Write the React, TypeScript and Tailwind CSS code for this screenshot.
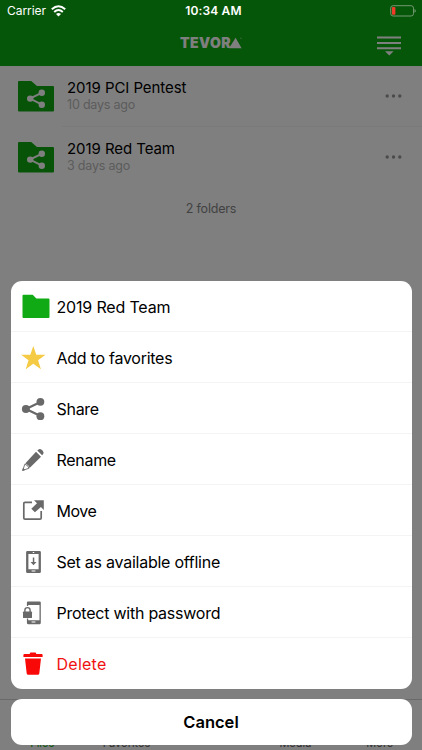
import type { ReactNode } from "react";

type Folder = {
  name: string;
  modified: string;
};

type SheetAction = {
  label: string;
  icon: ReactNode;
  className?: string;
};

const folders: Folder[] = [
  { name: "2019 PCI Pentest", modified: "10 days ago" },
  { name: "2019 Red Team", modified: "3 days ago" },
];

function FolderIcon() {
  return (
    <svg className="-mr-1.5 shrink-0" width="28" height="24" viewBox="0 0 28 24" fill="#10ab14">
      <path d="M1.500.8h9.200l3.700 3.700H26.500q1 0 1 1v17.500q0 1-1 1H1.500q-1 0-1-1v-21.200q0-1 1-1z" />
    </svg>
  );
}

function SharedFolderIcon() {
  return (
    <svg width="36" height="31" viewBox="0 0 36 31">
      <path
        fill="#0fa912"
        d="M1 0h12.200l5.800 5H35q1 0 1 1v23.500q0 1-1 1H1q-1 0-1-1V1q0-1 1-1z"
      />
      <path d="M24 11.700 12 17.600l12 6.100" fill="none" stroke="#fff" strokeWidth="1.900" />
      <g fill="#fff">
        <circle cx="23.800" cy="11.700" r="3.200" />
        <circle cx="12.200" cy="17.600" r="3.200" />
        <circle cx="23.800" cy="23.700" r="3.200" />
      </g>
    </svg>
  );
}

function StarIcon() {
  return (
    <svg className="mt-[2px]" width="26" height="24" viewBox="0 0 26 24" fill="#f5cb46">
      <path d="m13.300 0 3 8.800h9.200l-7.400 5.500 2.800 8.900-7.600-5.400-7.600 5.400 2.800-8.900L1.100 8.800h9.200z" />
    </svg>
  );
}

function ShareIcon() {
  return (
    <svg className="mt-px" width="24" height="24" viewBox="0 0 24 24" fill="#696969">
      <path d="M20 4.700 5 12l15 7.300" fill="none" stroke="#696969" strokeWidth="2.300" />
      <circle cx="19.400" cy="4.800" r="3.900" />
      <circle cx="4.900" cy="12" r="4" />
      <circle cx="19.400" cy="19.200" r="3.900" />
    </svg>
  );
}

function PencilIcon() {
  return (
    <svg className="mt-[2px]" width="24" height="24" viewBox="0 0 24 24" fill="#696969">
      <path d="m15 3.700 5 5L8.600 20.100l-1.400-2.900-3-1.600zM16.300 2.400l1.200-1q1.600-1.100 3.500.6l.7.700q1.600 1.900.5 3.400l-1.100 1.200z" />
      <path
        d="m3.800 16.200-2 6.100 6.100-2-1.200-2.500z"
        fill="#fff"
        stroke="#696969"
        strokeWidth=".9"
      />
      <path d="m1.100 23 .9-3.300 2.300 2.300z" />
    </svg>
  );
}

function MoveIcon() {
  return (
    <svg width="24" height="24" viewBox="0 0 24 24" fill="#696969">
      <path
        d="M11 4.300H4q-1.200 0-1.200 1.200v14.400Q2.800 21.100 4 21.100h15q1.200 0 1.200-1.200V13"
        fill="none"
        stroke="#696969"
        strokeWidth="1.700"
      />
      <path d="M13 2.200h9.800V12l-2.900-2.900-6 5.200-3.600-3.600 5.700-5.500z" />
    </svg>
  );
}

function OfflineIcon() {
  return (
    <svg className="mt-px" width="24" height="24" viewBox="0 0 24 24" fill="#696969">
      <path
        fillRule="evenodd"
        d="M6.500.9h12q1.400 0 1.400 1.400v19.400q0 1.400-1.400 1.400h-12q-1.400 0-1.400-1.400V2.300Q5.100.9 6.500.9zM7.400 4v15.200h10.200V4z"
      />
      <path d="M11.800 7.600h1.500v4.300h2.200l-3 3.400-3-3.400h2.300z" />
      <path d="M10.600 20.400h3.800v1.200h-3.800zM11.800 2h1.400v.9h-1.400z" fill="#fff" />
    </svg>
  );
}

function PasswordIcon() {
  return (
    <svg className="mt-px" width="24" height="24" viewBox="0 0 24 24" fill="#696969">
      <path
        fillRule="evenodd"
        d="M7 .5h11.700q1.100 0 1.100 1.100v20.500q0 1.100-1.100 1.100H7q-1.100 0-1.100-1.100V1.600Q5.900.5 7 .5zM7.200 4v15.200h11.300V4z"
      />
      <path d="M10.600 20.400h3.800v1.200h-3.800z" fill="#fff" />
      <path
        d="M1.500 10.800h1.100V8.600q0-2.900 3.900-2.900t3.900 2.900v2.200h.8v6H1.500z"
        fill="#fff"
        stroke="#fff"
        strokeWidth="1.600"
      />
      <path d="M3.900 11V9q0-2.400 2.600-2.400T9.100 9v2" fill="none" stroke="#696969" strokeWidth="1.400" />
      <rect x="2" y="10.600" width="9" height="6.500" rx=".7" />
    </svg>
  );
}

function TrashIcon() {
  return (
    <svg width="24" height="24" viewBox="0 0 24 24" fill="#f90808">
      <path d="M8.600 1.900 9.400.5h5.200l.8 1.400h5.200q1 0 1 1v2H2.400v-2q0-1 1-1zM4 6.600h16l-1.700 14.800q-.2 1.300-1.500 1.300H7.200q-1.300 0-1.500-1.300z" />
    </svg>
  );
}

const actions: SheetAction[] = [
  { label: "2019 Red Team", icon: <FolderIcon />, className: "tracking-[-0.17px]" },
  { label: "Add to favorites", icon: <StarIcon />, className: "tracking-[-0.26px]" },
  { label: "Share", icon: <ShareIcon />, className: "tracking-[-0.3px]" },
  { label: "Rename", icon: <PencilIcon />, className: "tracking-[-0.3px]" },
  { label: "Move", icon: <MoveIcon />, className: "tracking-[-0.5px]" },
  { label: "Set as available offline", icon: <OfflineIcon />, className: "tracking-[-0.25px]" },
  { label: "Protect with password", icon: <PasswordIcon />, className: "tracking-[-0.24px]" },
  { label: "Delete", icon: <TrashIcon />, className: "tracking-[0.25px] text-[#f01212]" },
];

function StatusBar() {
  return (
    <div className="absolute inset-x-0 top-0 grid h-[22px] grid-cols-3 items-center pl-[7px] pr-[6px] text-white">
      <div className="flex items-center gap-[5px]">
        <span className="text-[12px] tracking-[-0.05px]">Carrier</span>
        <svg width="15" height="12" viewBox="0 0 15 12" fill="none" stroke="#fff" strokeWidth="2">
          <path d="M.8 4.200q6.700-5.900 13.400 0M3.200 6.900q4.300-3.800 8.600 0" />
          <path d="M7.500 11.600 5 9q2.500-2 5 0z" fill="#fff" stroke="none" />
        </svg>
      </div>
      <span className="pl-[4px] text-center text-[12px] font-semibold tracking-[0.15px]">10:34 AM</span>
      <svg className="justify-self-end" width="26" height="12" viewBox="0 0 26 12">
        <rect x=".7" y=".7" width="22.800" height="10.300" rx="2.400" fill="none" stroke="#729872" />
        <rect x="1.900" y="2" width="3.500" height="7.700" rx="1" fill="#ef3b28" />
        <path d="M24.500 4.100q1.300.5 1.300 1.800t-1.300 1.800z" fill="#729872" />
      </svg>
    </div>
  );
}

function Header() {
  return (
    <header className="grid h-[66px] grid-cols-3 items-end bg-[#0cac12] pb-[10px]">
      <span />
      <div className="flex h-[26px] items-center justify-center">
        <span className="text-[14px] leading-none font-black tracking-[0.45px] text-white">TEVOR</span>
        <svg className="mb-px -ml-[2px]" width="13" height="12" viewBox="0 0 13 12" fill="#fff">
          <path d="M6.600.8 12.600 11.300H0z" />
          <path d="M11.200.8h1.400v1h-1.400z" opacity=".5" />
        </svg>
      </div>
      <svg className="mr-[21px] justify-self-end" width="24" height="20" viewBox="0 0 24 20" fill="#fff">
        <path d="M0 .6h24v2H0zM0 5.900h24v2H0zM0 11.200h24v2H0zM8 15.200h8.600l-4.300 4.300z" />
      </svg>
    </header>
  );
}

function FolderRow({ folder }: { folder: Folder }) {
  return (
    <li className="group flex h-[61px] pl-[18px]">
      <div className="w-[44px] pt-[15px]">
        <SharedFolderIcon />
      </div>
      <div className="flex flex-1 items-center justify-between border-b border-[#f4f4f4] pr-[20px] pl-[5px] group-last:border-transparent">
        <div className="pb-px">
          <p className="text-[15px] leading-[18px] tracking-[-0.07px] text-black">{folder.name}</p>
          <p className="text-[12.5px] leading-[15px] tracking-[-0.2px] text-[#b8b8b8]">{folder.modified}</p>
        </div>
        <svg width="17" height="4" viewBox="0 0 17 4" fill="#979797">
          <circle cx="2.200" cy="2" r="1.700" />
          <circle cx="8.500" cy="2" r="1.700" />
          <circle cx="14.800" cy="2" r="1.700" />
        </svg>
      </div>
    </li>
  );
}

export default function App() {
  return (
    <main className="relative flex h-[750px] w-[422px] flex-col overflow-hidden bg-white font-['Inter',sans-serif]">
      <Header />
      <ul>
        {folders.map((folder) => (
          <FolderRow key={folder.name} folder={folder} />
        ))}
      </ul>
      <p className="mt-[13px] text-center text-[12.5px] leading-[16px] tracking-[-0.2px] text-[#858585]">
        2 folders
      </p>

      <nav className="mt-auto grid h-[51px] grid-cols-5 items-end border-t border-[#d2d2d2] text-center text-[11px] leading-[13px] text-[#606060]">
        <span className="text-[#0cac12]">Files</span>
        <span>Favorites</span>
        <span />
        <span>Media</span>
        <span>More</span>
      </nav>

      {/* Dimmed backdrop with the action sheet on top */}
      <div className="absolute inset-0 flex flex-col justify-end gap-[10px] bg-black/50 px-[10.5px] pb-[5.500px]">
        <ul className="overflow-hidden rounded-[11px] bg-white">
          {actions.map((action) => (
            <li
              key={action.label}
              className="flex h-[51px] items-center border-b border-[#f4f4f4] pl-[8px] last:border-b-0"
            >
              <span className="flex w-[28px] justify-center">{action.icon}</span>
              <span className={`pt-px pl-[10px] text-[16px] ${action.className ?? ""}`}>{action.label}</span>
            </li>
          ))}
        </ul>
        <button className="h-[45.5px] rounded-[11px] bg-white pt-px text-[16.5px] font-semibold text-black">
          Cancel
        </button>
      </div>

      <StatusBar />
    </main>
  );
}
